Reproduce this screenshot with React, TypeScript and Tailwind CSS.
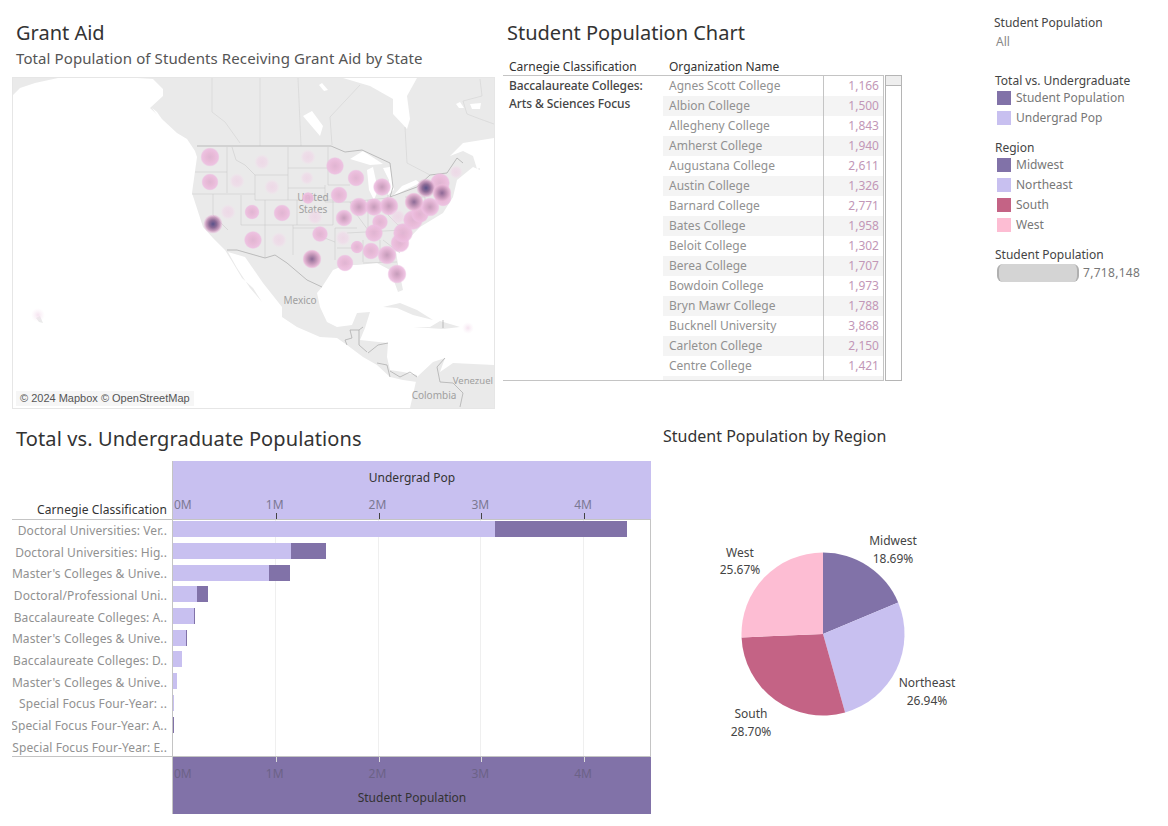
const font = "font-['Noto_Sans',sans-serif]"

const schools = [
  ['Agnes Scott College', '1,166'],
  ['Albion College', '1,500'],
  ['Allegheny College', '1,843'],
  ['Amherst College', '1,940'],
  ['Augustana College', '2,611'],
  ['Austin College', '1,326'],
  ['Barnard College', '2,771'],
  ['Bates College', '1,958'],
  ['Beloit College', '1,302'],
  ['Berea College', '1,707'],
  ['Bowdoin College', '1,973'],
  ['Bryn Mawr College', '1,788'],
  ['Bucknell University', '3,868'],
  ['Carleton College', '2,150'],
  ['Centre College', '1,421'],
]

const bars: [string, number, number][] = [
  ['Doctoral Universities: Ver..', 322, 454],
  ['Doctoral Universities: Hig..', 118, 153],
  ["Master's Colleges & Unive..", 96, 117],
  ['Doctoral/Professional Uni..', 24, 35],
  ['Baccalaureate Colleges: A..', 21, 22],
  ["Master's Colleges & Unive..", 13, 14],
  ['Baccalaureate Colleges: D..', 9, 9],
  ["Master's Colleges & Unive..", 4, 4],
  ['Special Focus Four-Year: ..', 1, 1],
  ['Special Focus Four-Year: A..', 0, 1],
  ['Special Focus Four-Year: E..', 0, 0],
]

// state blobs: x, y, r, gradient
const blobs: [number, number, number, string][] = [
  [210, 157, 9.5, 'med'], [210, 182, 8.5, 'med'], [237, 181, 8, 'faint'], [262, 162, 8, 'faint'],
  [272, 187, 8, 'faint'], [308, 157, 8, 'faint'], [307, 178, 7, 'faint'], [315, 217, 8, 'faint'],
  [335, 166, 9, 'med'], [356, 178, 8.5, 'med'], [382, 187, 9, 'med2'], [339, 195, 8.5, 'med'],
  [344, 218, 8.5, 'med2'], [359, 207, 9.5, 'med2'], [374, 207, 9, 'med2'], [389, 206, 9.5, 'med2'],
  [380, 222, 8, 'med'], [374, 233, 9, 'med'], [343, 238, 8, 'faint'], [320, 234, 8, 'med'],
  [312, 259, 9.5, 'dark'], [345, 263, 8.5, 'med'], [357, 247, 6.5, 'med'], [371, 251, 8.5, 'med'],
  [387, 255, 9.5, 'med2'], [397, 274, 9.5, 'med2'], [398, 217, 8, 'faint'], [400, 243, 9.5, 'med'],
  [403, 233, 10, 'med'], [413, 220, 10, 'med'], [420, 214, 9, 'med'], [440, 183, 10, 'med'], [430, 207, 9.5, 'med2'],
  [443, 198, 8.5, 'med'], [414, 202, 9.5, 'dark'], [426, 188, 9.5, 'darkest'], [442, 193, 9.5, 'dark'],
  [456, 172, 7, 'faint'], [213, 224, 9.5, 'darkest'], [228, 212, 8, 'faint'], [252, 212, 7.5, 'med'],
  [282, 213, 8.5, 'med'], [253, 240, 9, 'med'], [279, 240, 8, 'faint'], [308, 198, 6, 'med'],
  [38, 315, 7, 'ghost'], [468, 328, 6, 'ghost'],
]

const land = [
  'M13 95L20 88L35 83L58 78L13 78Z',
  // north america mainland
  'M137 78L153 79L163 89L163 96L150 108L177 133L187 139L195 151L197 157L192 193L203 227L213 238L225 250L233 263L242 278L253 288L262 302L250 288L237 268L228 252L245 257L263 283L282 307L282 317L297 327L320 337L337 338L347 345L363 357L377 365L390 377L403 380L417 382L417 375L403 372L390 370L387 357L388 343L360 340L365 328L370 312L357 313L352 325L337 327L327 322L320 307L317 293L322 287L333 270L345 265L357 265L377 263L390 270L398 292L403 290L399 270L396 252L420 227L443 213L453 197L457 180L473 167L480 170L478 156L494 160L494 78Z',
  // caribbean + south america
  'M383 307L400 303L417 310L433 320L413 315L397 308Z',
  'M413 327L430 327L440 321L460 327L443 329Z',
  'M410 408L417 377L433 362L445 358L440 372L453 363L494 365L494 408Z',
  'M36 318L40 316L43 323L39 322Z',
]

const water = [
  'M343 78L370 86L393 99L393 114L407 129L410 119L407 96L417 78Z',
  'M450 156L463 143L494 138L494 163L477 169L473 156L463 151Z',
  'M312 111L323 126L320 136L303 116Z',
  'M350 159L363 151L383 164L370 165Z',
  'M367 170L373 167L378 190L374 200L369 190Z',
  'M383 168L390 167L394 190L388 195L389 180Z',
  'M392 197L405 190L420 183L416 180L402 186Z',
  'M152 108L157 112L172 134L165 126Z',
  'M319 85L322 83L328 90L324 91Z',
  'M456 104L460 102L464 108L459 108Z',
  'M470 104L481 103L480 109L472 109Z',
]

const borders = [
  'M197 146L331 146L345 152L362 150L390 163L393 187L390 197L417 187L430 175L447 173L457 158L463 163',
  'M227 250L237 250L265 258L275 255L287 263L307 280L322 287',
  'M363 327L359 330L350 330L352 338L345 340L347 345',
  'M359 330L359 345L367 352',
  'M368 353L378 345L388 343',
  'M377 363L387 365L390 377',
  'M390 371L400 377L410 372L417 377',
  'M443 320L443 328',
  'M445 358L437 367L440 382L453 383L463 393L460 407',
]

const provinces = [
  'M212 78L212 112L225 122L240 143',
  'M260 78L260 146',
  'M298 78L301 146',
  'M360 85L330 117L332 145',
  'M405 127L407 163L430 175',
  'M480 79L482 96L463 101L467 114L480 119L494 124',
]

const states = [
  'M227 147L227 193', 'M192 194L255 194', 'M195 172L227 172', 'M232 147L236 160L245 165L255 175',
  'M255 175L288 175L288 200L255 200Z', 'M288 147L288 175', 'M288 168L328 168', 'M288 188L325 188',
  'M288 200L333 200L333 225', 'M265 200L265 258', 'M297 200L297 225', 'M241 195L241 225',
  'M213 194L213 215L228 230', 'M241 225L333 225', 'M293 225L293 255', 'M293 228L317 228L317 235L335 242',
  'M335 228L335 260', 'M328 147L328 185L350 185', 'M325 202L350 202L357 215', 'M325 185L325 202',
  'M368 200L368 230', 'M388 195L388 215', 'M347 233L403 230', 'M335 228L357 228', 'M337 248L353 248',
  'M363 240L363 262', 'M380 240L380 262', 'M363 263L397 262', 'M383 240L400 253', 'M350 202L368 200',
  'M368 200L388 198', 'M388 215L398 225L413 226', 'M405 197L425 197L425 208', 'M357 215L368 230',
]

const pie: [number, string][] = [
  [18.69, '#8172a8'],
  [26.94, '#c8c0f0'],
  [28.7, '#c46385'],
  [25.67, '#fdbdd3'],
]

function sliceFrom(start: number, pct: number) {
  const r = 81.5
  const a0 = (start / 100) * Math.PI * 2
  const a1 = ((start + pct) / 100) * Math.PI * 2
  const big = pct > 50 ? 1 : 0
  return `M0 0L${r * Math.sin(a0)} ${-r * Math.cos(a0)}A${r} ${r} 0 ${big} 1 ${r * Math.sin(a1)} ${-r * Math.cos(a1)}Z`
}

const MapPanel = () => (
  <div className="ml-3 mt-[9px] relative w-[483px] h-[332px] border border-[#e6e6e6] bg-white overflow-hidden">
    <svg viewBox="13 78 481 330" className="w-[481px] h-[330px] block">
      <defs>
        <radialGradient id="ghost">
          <stop offset="0%" stopColor="#f3dcec" stopOpacity="0.8" />
          <stop offset="100%" stopColor="#f8ebf4" stopOpacity="0" />
        </radialGradient>
        <radialGradient id="faint">
          <stop offset="0%" stopColor="#eed3e5" stopOpacity="0.75" />
          <stop offset="60%" stopColor="#f0d6e8" stopOpacity="0.6" />
          <stop offset="100%" stopColor="#f5e0ee" stopOpacity="0" />
        </radialGradient>
        <radialGradient id="med">
          <stop offset="0%" stopColor="#dfb0d0" />
          <stop offset="45%" stopColor="#e8b6d6" />
          <stop offset="85%" stopColor="#edbee0" />
          <stop offset="100%" stopColor="#edbee0" stopOpacity="0.2" />
        </radialGradient>
        <radialGradient id="med2">
          <stop offset="0%" stopColor="#c295b6" />
          <stop offset="45%" stopColor="#dba9cb" />
          <stop offset="85%" stopColor="#edbee0" />
          <stop offset="100%" stopColor="#edbee0" stopOpacity="0.2" />
        </radialGradient>
        <radialGradient id="dark">
          <stop offset="0%" stopColor="#84608f" />
          <stop offset="45%" stopColor="#bb8bb0" />
          <stop offset="85%" stopColor="#e8b6d6" />
          <stop offset="100%" stopColor="#edbee0" stopOpacity="0.2" />
        </radialGradient>
        <radialGradient id="darkest">
          <stop offset="0%" stopColor="#4d4480" />
          <stop offset="40%" stopColor="#85608f" />
          <stop offset="75%" stopColor="#c99abd" />
          <stop offset="100%" stopColor="#edbee0" stopOpacity="0.3" />
        </radialGradient>
      </defs>
      <g className="blur-[0.5px]">
        {land.map((d, i) => (
          <path key={i} d={d} fill="#eaeaea" />
        ))}
        {water.map((d, i) => (
          <path key={i} d={d} fill="#ffffff" />
        ))}
      </g>
      {provinces.map((d, i) => (
        <path key={i} d={d} fill="none" stroke="#cfcfcf" strokeWidth="0.5" />
      ))}
      {states.map((d, i) => (
        <path key={i} d={d} fill="none" stroke="#c6c6c6" strokeWidth="0.5" />
      ))}
      {borders.map((d, i) => (
        <path key={i} d={d} fill="none" stroke="#a8a8a8" strokeWidth="0.7" />
      ))}
      <g fill="#a0a0a0" fontSize="10" className={font}>
        <text x="313" y="201" textAnchor="middle">United</text>
        <text x="313" y="213" textAnchor="middle">States</text>
        <text x="300" y="304" textAnchor="middle">Mexico</text>
        <text x="493" y="384" textAnchor="end" fontSize="9.5">Venezuel</text>
        <text x="434" y="399" textAnchor="middle">Colombia</text>
      </g>
      {blobs.map(([x, y, r, g], i) => (
        <circle key={i} cx={x} cy={y} r={r} fill={`url(#${g})`} opacity={g === 'faint' || g === 'ghost' ? 1 : 0.92} />
      ))}
    </svg>
    <div className="absolute left-[3px] bottom-[2px] h-[15px] px-1 bg-[#f6f6f6] font-['Liberation_Sans',sans-serif] text-[11px] leading-[15px] text-[#555]">
      © 2024 Mapbox © OpenStreetMap
    </div>
  </div>
)

const StudentTable = () => (
  <div className="ml-2 w-[400px]">
    <h2 className="ml-1 mt-[18px] h-[31px] text-[20px] leading-[30px] text-[#333]">Student Population Chart</h2>
    <div className="flex h-[26px] items-end text-xs leading-[16px] text-[#333]">
      <div className="w-[166px] pl-[6px] whitespace-nowrap">Carnegie Classification</div>
      <div className="whitespace-nowrap">Organization Name</div>
    </div>
    <div className="flex">
      <div className="w-[381px] h-[306px] border-y border-[#c4c4c4] flex overflow-hidden">
        <div className="w-[160px] pl-[6px] pt-[1px] text-xs leading-[18px] font-medium tracking-[-0.1px] text-[#444]">
          <div className="whitespace-nowrap">Baccalaureate Colleges:</div>
          <div className="whitespace-nowrap">Arts &amp; Sciences Focus</div>
        </div>
        <div className="w-[221px] text-xs border-r border-[#c4c4c4]">
          {schools.map(([name, n], i) => (
            <div key={name} className={`flex h-5 leading-5 ${i % 2 ? 'bg-[#f4f4f4]' : ''}`}>
              <div className="w-[161px] pl-[6px] text-[#919191] whitespace-nowrap border-r border-[#c4c4c4]">{name}</div>
              <div className="flex-1 pr-1 text-right text-[#c297b7]">{n}</div>
            </div>
          ))}
          <div className="h-5 bg-[#f4f4f4] flex">
            <div className="w-[161px] border-r border-[#c4c4c4]" />
          </div>
        </div>
      </div>
      <div className="ml-[1px] w-[17px] h-[306px] border border-[#b5b5b5]">
        <div className="h-[10px] bg-[#eeeeee] border-b border-[#b5b5b5]" />
      </div>
    </div>
  </div>
)

const AxisLabels = ({ color }: { color: string }) => (
  <div className={`flex h-[16px] text-xs leading-4 ${color}`}>
    <div className="w-[102.8px] shrink-0 pl-[1px]">0M</div>
    {['1M', '2M', '3M', '4M'].map(t => (
      <div key={t} className="w-[102.8px] shrink-0"><span className="-ml-[10px]">{t}</span></div>
    ))}
  </div>
)

const AxisTicks = ({ h, color }: { h: string; color: string }) => (
  <div className={`flex ${h}`}>
    <div className="w-[102.8px] shrink-0" />
    {[1, 2, 3, 4].map(t => (
      <div key={t} className={`w-[102.8px] shrink-0 border-l ${color}`} />
    ))}
  </div>
)

const PopulationChart = () => (
  <div className="w-[651px] shrink-0">
    <h2 className="ml-4 mt-[15px] h-[31px] text-[20px] leading-[30px] tracking-[0.1px] text-[#333] whitespace-nowrap">Total vs. Undergraduate Populations</h2>
    <div className="mt-[6px] flex h-[58px]">
      <div className="w-[172px] shrink-0 pr-[5px] pb-[1px] flex items-end justify-end text-xs tracking-[0.1px] text-[#333] whitespace-nowrap">Carnegie Classification</div>
      <div className="flex-1 min-w-0 overflow-hidden bg-[#c8c0f0] border-l border-[#c4c4c4] flex flex-col">
        <div className="h-[36px] pt-[7px] text-center text-xs leading-5 text-[#333]">Undergrad Pop</div>
        <AxisLabels color="text-[#7b7893]" />
        <AxisTicks h="h-[6px]" color="border-[#444]" />
      </div>
    </div>
    <div className="ml-3 flex h-[238px] overflow-hidden border-y border-[#c4c4c4]">
      <div className="w-[160px] shrink-0 flex flex-col">
        {bars.map(([label], i) => (
          <div key={i} className="h-[21.7px] shrink-0 flex items-center justify-end pr-[5px] text-xs tracking-[0.1px] text-[#919191] whitespace-nowrap">{label}</div>
        ))}
      </div>
      <div className="relative flex-1 min-w-0 overflow-hidden border-x border-[#c4c4c4] flex flex-col">
        <div className="absolute inset-0 flex">
          {[0, 1, 2, 3].map(t => (
            <div key={t} className="w-[102.8px] shrink-0 border-r border-[#efefef]" />
          ))}
        </div>
        {bars.map(([label, under, total], i) => (
          <div key={i} className="relative h-[21.7px] shrink-0 pb-[3px] flex items-center">
            <div className="h-4 flex bg-[#8172a8]" style={{ width: total }}>
              <div className="h-4 bg-[#c8c0f0]" style={{ width: under }} />
            </div>
          </div>
        ))}
      </div>
    </div>
    <div className="ml-[172px] h-[57px] overflow-hidden bg-[#8172a8] border-l border-[#c4c4c4] flex flex-col">
      <AxisTicks h="h-[5px]" color="border-[#dddddd]" />
      <div className="mt-[4px]">
        <AxisLabels color="text-[#6c6287]" />
      </div>
      <div className="mt-[6px] text-center text-xs leading-5 text-[#333]">Student Population</div>
    </div>
  </div>
)

const RegionPie = () => {
  let start = 0
  return (
    <div className="ml-3 w-[320px]">
      <h3 className="mt-[15px] h-[24px] text-base leading-6 text-[#333] whitespace-nowrap">Student Population by Region</h3>
      <svg viewBox="0 0 320 310" className="w-[320px] h-[310px] block mt-[11px]">
        <g transform="translate(160 175)">
          {pie.map(([pct, color]) => {
            const d = sliceFrom(start, pct)
            start += pct
            return <path key={color} d={d} fill={color} />
          })}
        </g>
        <g fontSize="12" fill="#444" textAnchor="middle">
          <text x="230" y="86">Midwest</text>
          <text x="230" y="104">18.69%</text>
          <text x="264" y="228">Northeast</text>
          <text x="264" y="246">26.94%</text>
          <text x="88" y="259">South</text>
          <text x="88" y="277">28.70%</text>
          <text x="77" y="98">West</text>
          <text x="77" y="115">25.67%</text>
        </g>
      </svg>
    </div>
  )
}

const LegendRow = ({ color, label }: { color: string; label: string }) => (
  <div className="flex h-5 items-center">
    <div className={`w-[14px] h-[14px] ${color}`} />
    <span className="ml-[5px] text-[#777]">{label}</span>
  </div>
)

const Legends = () => (
  <div className="w-[180px] pl-[11px] pt-[14px] text-xs leading-[18px] text-[#444]">
    <div>Student Population</div>
    <div className="ml-[2px] mt-[1px] text-[#888]">All</div>
    <div className="ml-[1px] mt-[21px]">Total vs. Undergraduate</div>
    <div className="ml-[3px] -mt-[2px]">
      <LegendRow color="bg-[#8172a8]" label="Student Population" />
      <LegendRow color="bg-[#c8c0f0]" label="Undergrad Pop" />
    </div>
    <div className="ml-[1px] mt-[11px]">Region</div>
    <div className="ml-[3px] -mt-[2px]">
      <LegendRow color="bg-[#8172a8]" label="Midwest" />
      <LegendRow color="bg-[#c8c0f0]" label="Northeast" />
      <LegendRow color="bg-[#c46385]" label="South" />
      <LegendRow color="bg-[#fdbdd3]" label="West" />
    </div>
    <div className="ml-[1px] mt-[11px]">Student Population</div>
    <div className="ml-[3px] flex items-center">
      <div className="w-[82px] h-[18px] bg-[#d4d4d4] border-x-2 border-[#b0b0b0] rounded-[6px]" />
      <span className="ml-1 tracking-[0.3px] text-[#777]">7,718,148</span>
    </div>
  </div>
)

export default function App() {
  return (
    <div className={`${font} w-[1168px] h-[826px] bg-white flex overflow-hidden`}>
      <div className="w-[983px] flex flex-col">
        <div className="flex h-[409px]">
          <div className="w-[495px]">
            <h1 className="ml-4 mt-[18px] h-[31px] text-[20px] leading-[30px] text-[#333]">Grant Aid</h1>
            <p className="ml-4 h-[19px] text-[15px] leading-[19px] tracking-[0.1px] text-[#555] whitespace-nowrap">Total Population of Students Receiving Grant Aid by State</p>
            <MapPanel />
          </div>
          <StudentTable />
        </div>
        <div className="flex">
          <PopulationChart />
          <RegionPie />
        </div>
      </div>
      <Legends />
    </div>
  )
}
